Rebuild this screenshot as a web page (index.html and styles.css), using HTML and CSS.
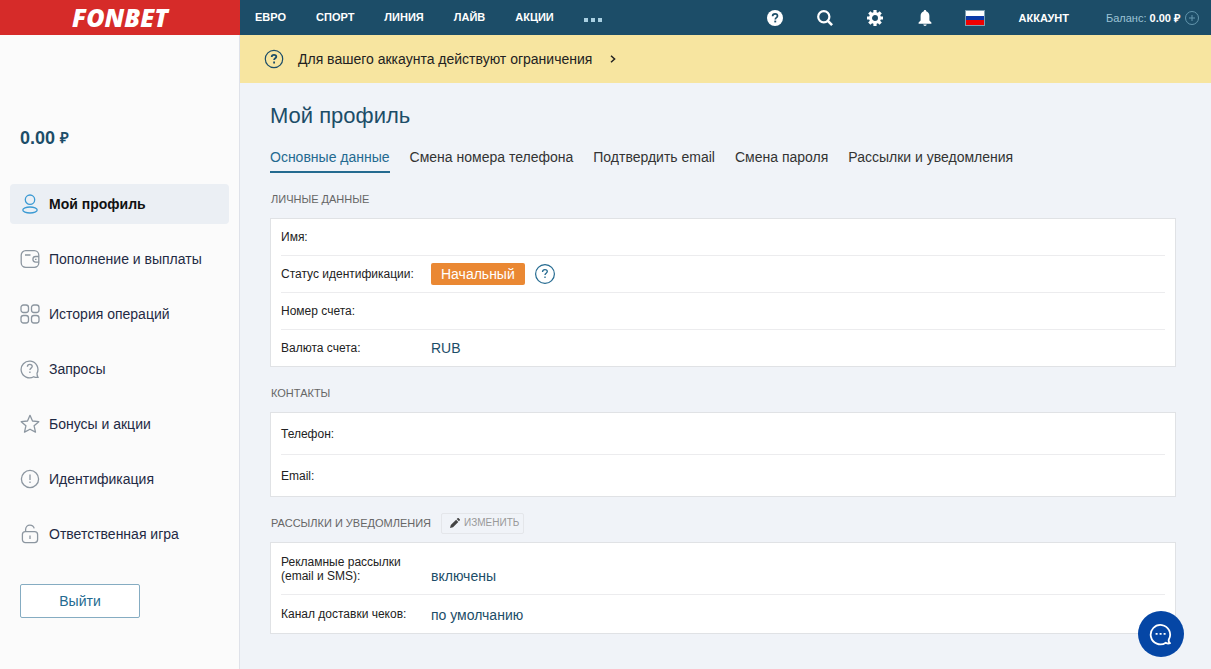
FILE: index.html
```
<!DOCTYPE html>
<html lang="ru">
<head>
<meta charset="utf-8">
<meta name="viewport" content="width=device-width, initial-scale=1">
<title>Мой профиль</title>
<link rel="stylesheet" href="styles.css">
</head>
<body>
<div class="page">
  <header class="topbar">
    <a class="logo" href="#">FONBET</a>
    <nav class="nav" aria-label="Разделы">
      <a href="#">ЕВРО</a>
      <a href="#">СПОРТ</a>
      <a href="#">ЛИНИЯ</a>
      <a href="#">ЛАЙВ</a>
      <a href="#">АКЦИИ</a>
      <button class="nav-more" type="button" aria-label="Ещё"><i></i><i></i><i></i></button>
    </nav>
    <div class="tools">
      <button class="tool" type="button" aria-label="Помощь">
        <svg width="16" height="16" viewBox="0 0 16 16"><circle cx="8" cy="8" r="8" fill="#fff"/><path d="M5.600 6.300c0-1.500 1-2.400 2.500-2.400s2.400.9 2.400 2.100c0 1.600-2.200 1.700-2.200 3.400" fill="none" stroke="#1c4d68" stroke-width="1.700"/><path d="M7.300 10.600h1.900v1.800H7.300z" fill="#1c4d68"/></svg>
      </button>
      <button class="tool" type="button" aria-label="Поиск">
        <svg width="16" height="16" viewBox="0 0 16 16" fill="none" stroke="#fff"><circle cx="6.800" cy="6.800" r="5.600" stroke-width="2.200"/><path d="M10.800 10.800l4.300 4.300" stroke-width="2.600"/></svg>
      </button>
      <button class="tool" type="button" aria-label="Настройки">
        <svg width="16" height="16" viewBox="0 0 16 16" fill="none" stroke="#fff"><circle cx="8" cy="8" r="4.500" stroke-width="3"/><g stroke-width="3.200"><path d="M8 0v3M8 13v3M0 8h3M13 8h3"/><path d="M2.300 2.300l2.200 2.200M11.500 11.500l2.200 2.200M13.700 2.300l-2.200 2.200M4.500 11.500l-2.200 2.200"/></g></svg>
      </button>
      <button class="tool" type="button" aria-label="Уведомления">
        <svg width="16" height="16" viewBox="0 0 16 16" fill="#fff"><path d="M8 0c.8 0 1.200.5 1.200 1.300 2 .6 3.200 2.300 3.200 4.500V10.500l2 2v1.300H1.600v-1.300l2-2V5.800c0-2.200 1.200-3.900 3.200-4.500C6.800.5 7.200 0 8 0zM6.300 14.600h3.400C9.600 15.500 9 16 8 16s-1.600-.5-1.700-1.400z"/></svg>
      </button>
      <button class="tool" type="button" aria-label="Язык: русский"><span class="flag"></span></button>
    </div>
    <a class="account" href="#">АККАУНТ</a>
    <div class="balance">
      <span>Баланс: <b>0.00 ₽</b></span>
      <button class="topup" type="button" aria-label="Пополнить">
        <svg width="14" height="14" viewBox="0 0 14 14" fill="none" stroke="#6497ae"><circle cx="7" cy="7" r="6.500"/><path d="M7 4v6M4 7h6"/></svg>
      </button>
    </div>
  </header>

  <aside class="sidebar">
    <div class="amount">0.00 <span>₽</span></div>
    <nav class="menu" aria-label="Меню профиля">
      <a class="menu-item active" href="#"><svg class="icon" viewBox="0 0 20 20"><circle cx="10" cy="5.700" r="4.700"/><ellipse cx="10" cy="16" rx="7.200" ry="3"/></svg>Мой профиль</a>
      <a class="menu-item" href="#"><svg class="icon" viewBox="0 0 20 20"><rect x="1.200" y="1.700" width="17.600" height="16.600" rx="4.500"/><path d="M5 6h5.500M19 7.500h-3.300a2.800 2.800 0 0 0 0 5.600H19M15 10.300h1.500"/></svg>Пополнение и выплаты</a>
      <a class="menu-item" href="#"><svg class="icon" viewBox="0 0 20 20"><rect x="1" y="1" width="7.500" height="7.500" rx="2.500"/><rect x="11.500" y="1" width="7.500" height="7.500" rx="2.500"/><rect x="1" y="11.500" width="7.500" height="7.500" rx="2.500"/><rect x="11.500" y="11.500" width="7.500" height="7.500" rx="2.500"/></svg>История операций</a>
      <a class="menu-item" href="#"><svg class="icon" viewBox="0 0 20 20"><path d="M18 18.300c-1.500.3-3 .1-4.200-.6A8.400 8.400 0 1 1 17 14.300c0 1.500.2 2.900 1 4z"/><path d="M7.400 7.800c0-1.500 1-2.500 2.400-2.500s2.400 1 2.400 2.200c0 1.600-2.300 1.700-2.300 3.500M9.900 12.500v1.600"/></svg>Запросы</a>
      <a class="menu-item" href="#"><svg class="icon" viewBox="0 0 20 20"><path d="M10 1.300l2.500 5.700 6.300.7-4.700 4.100 1.400 6.300L10 15.200l-5.500 2.900 1.400-6.300L1.200 7.700 7.500 7z" stroke-linejoin="round"/></svg>Бонусы и акции</a>
      <a class="menu-item" href="#"><svg class="icon" viewBox="0 0 20 20"><circle cx="10" cy="10" r="8.600"/><path d="M10 5.500v5.500M10 12.500v1.600"/></svg>Идентификация</a>
      <a class="menu-item" href="#"><svg class="icon" viewBox="0 0 20 20"><rect x="2.400" y="7.600" width="15.200" height="11" rx="3"/><path d="M5.600 7.400V5.600c0-2.700 1.800-4.500 4.300-4.500 2.300 0 3.800 1.300 4.300 3.300M10 11.500v3.400"/></svg>Ответственная игра</a>
    </nav>
    <button class="logout" type="button">Выйти</button>
  </aside>

  <main class="main">
    <a class="notice" href="#">
      <svg width="20" height="20" viewBox="0 0 20 20" fill="none" stroke="#1c4d68"><circle cx="10" cy="10" r="8.700" stroke-width="1.200"/><path d="M7.700 8c0-1.300.9-2.100 2.300-2.100s2.300.8 2.300 1.900c0 1.500-2.200 1.600-2.200 3.200M10.100 12.400v2" stroke-width="1.800"/></svg>
      <span>Для вашего аккаунта действуют ограничения</span>
      <svg class="notice-arrow" width="6" height="8" viewBox="0 0 6 8" fill="none" stroke="#222" stroke-width="1.500"><path d="M1 .7L4.600 4 1 7.300"/></svg>
    </a>
    <div class="content">
      <h1>Мой профиль</h1>
      <nav class="tabs" aria-label="Настройки профиля">
        <a class="current" href="#">Основные данные</a>
        <a href="#">Смена номера телефона</a>
        <a href="#">Подтвердить email</a>
        <a href="#">Смена пароля</a>
        <a href="#">Рассылки и уведомления</a>
      </nav>

      <section>
        <div class="section-head"><h2>ЛИЧНЫЕ ДАННЫЕ</h2></div>
        <dl class="card">
          <div class="row"><dt>Имя:</dt><dd></dd></div>
          <div class="row"><dt>Статус идентификации:</dt><dd><span class="badge">Начальный</span><button class="hint" type="button" aria-label="О статусе"><svg width="20" height="20" viewBox="0 0 20 20" fill="none" stroke="#246a90"><circle cx="10" cy="10" r="9.400" stroke-width="1.200"/><path d="M7.500 7.900c0-1.400.9-2.300 2.400-2.300s2.400.9 2.400 2c0 1.600-2.300 1.700-2.300 3.400M10 12.400V14" stroke-width="1.300"/></svg></button></dd></div>
          <div class="row"><dt>Номер счета:</dt><dd></dd></div>
          <div class="row"><dt>Валюта счета:</dt><dd>RUB</dd></div>
        </dl>
      </section>

      <section>
        <div class="section-head"><h2>КОНТАКТЫ</h2></div>
        <dl class="card roomy">
          <div class="row"><dt>Телефон:</dt><dd></dd></div>
          <div class="row"><dt>Email:</dt><dd></dd></div>
        </dl>
      </section>

      <section>
        <div class="section-head"><h2>РАССЫЛКИ И УВЕДОМЛЕНИЯ</h2>
          <button class="edit" type="button"><svg width="10" height="10" viewBox="0 0 10 10" fill="#444"><path d="M0 10l.8-3 5.300-5.300 2.200 2.200L3 9.200zM6.700 1.100L7.500.3c.4-.4.9-.4 1.200 0l1 1c.4.3.4.800 0 1.200l-.8.8z"/></svg>ИЗМЕНИТЬ</button>
        </div>
        <dl class="card mailing">
          <div class="row"><dt>Рекламные рассылки (email и SMS):</dt><dd>включены</dd></div>
          <div class="row"><dt>Канал доставки чеков:</dt><dd>по умолчанию</dd></div>
        </dl>
      </section>
    </div>
  </main>
</div>
<button class="chat" type="button" aria-label="Чат">
  <svg width="24" height="24" viewBox="0 0 24 24" fill="none" stroke="#fff" stroke-width="1.800"><path d="M21 21.200c-1.600.6-3 .3-4.200-.5A9.700 9.700 0 1 1 19.800 17.500c-.4 1.500-.1 2.700 1.200 3.700z" stroke-linejoin="round"/><path d="M6.600 11.800h2M10.600 11.800h2M14.600 11.800h2"/></svg>
</button>
</body>
</html>
```
FILE: styles.css
```
* { box-sizing: border-box; }

body {
  margin: 0;
  background: #f0f3f8;
  color: #222;
  font: 14px/20px "Liberation Sans", Arial, sans-serif;
}

a { color: inherit; text-decoration: none; }

button {
  margin: 0;
  padding: 0;
  border: 0;
  background: none;
  color: inherit;
  font: inherit;
  cursor: pointer;
}

svg { display: block; flex: none; }

.page {
  display: grid;
  grid-template: 35px 1fr / 240px minmax(0, 1fr);
  min-height: 100vh;
}

/* Top bar */
.topbar {
  grid-column: 1 / -1;
  display: flex;
  align-items: stretch;
  background: #1c4d68;
  color: #fff;
  font-size: 11px;
}

.logo {
  flex: none;
  width: 240px;
  background: #d62b29;
  font: italic 800 25px/35px "Open Sans", sans-serif;
  text-align: center;
}

.nav {
  display: flex;
  flex: 1;
  align-items: center;
  gap: 30px;
  padding: 0 0 2px 15px;
  font-weight: bold;
}

.nav-more { display: flex; gap: 3px; padding-top: 6px; }
.nav-more i { width: 4px; height: 4px; background: #a9d0e2; }

.tools { display: flex; }
.tool { display: grid; place-items: center; width: 50px; }

.flag {
  width: 20px;
  height: 16px;
  border: 1px solid #7d9fb2;
  background: linear-gradient(#fff 33%, #0b3aa8 33% 66%, #f00000 66%);
}

.account { align-self: center; margin-left: 19px; font-weight: bold; }

.balance {
  display: flex;
  align-items: center;
  gap: 5px;
  margin-left: 37px;
  padding-right: 12px;
  color: #9cc3d6;
}
.balance b { color: #fff; }

/* Sidebar */
.sidebar {
  padding: 92px 10px 20px;
  border-right: 1px solid #dfe2e9;
  background: #fbfbfb;
}

.amount {
  padding-left: 10px;
  color: #1c4d68;
  font-size: 18px;
  font-weight: bold;
  line-height: 22px;
}
.amount span { font-size: 15px; vertical-align: 1px; }

.menu { display: grid; gap: 15px; margin-top: 35px; }

.menu-item {
  display: flex;
  align-items: center;
  gap: 9px;
  height: 40px;
  padding: 0 10px;
  border-radius: 4px;
  color: #1f2a44;
}
.menu-item.active { background: #ebeff4; color: #111; font-weight: bold; }

.icon { width: 20px; height: 20px; fill: none; stroke: #8c96a0; stroke-width: 1.3; }
.active .icon { stroke: #3b9ad3; }

.logout {
  width: 120px;
  height: 34px;
  margin: 30px 0 0 10px;
  border: 1px solid #85acc2;
  border-radius: 2px;
  background: #fff;
  color: #246a90;
}

/* Main column */
.notice {
  display: flex;
  align-items: center;
  height: 48px;
  padding: 0 24px;
  gap: 14px;
  background: #f7e5a0;
}
.notice-arrow { margin-left: 4px; }

.content { padding: 20px 35px 35px 30px; }

h1, h2, dl, dd { margin: 0; font-weight: normal; }

h1 { color: #1c4d68; font-size: 22px; line-height: 26px; }

.tabs { display: flex; gap: 20px; margin-top: 15px; }
.tabs a { padding: 3px 0 4px; border-bottom: 2px solid transparent; color: #333; }
.tabs .current { border-color: #246a90; color: #246a90; }

.section-head {
  display: flex;
  align-items: center;
  gap: 10px;
  height: 45px;
  padding: 7px 0 0 1px;
}

h2 { color: #666; font-size: 11px; }

.edit {
  display: flex;
  align-items: center;
  gap: 4px;
  height: 21px;
  padding: 0 4px 0 8px;
  border: 1px solid #e4e6ea;
  border-radius: 2px;
  color: #999;
  font-size: 10px;
}

.card { padding: 0 10px; border: 1px solid #e0e2e5; background: #fff; }

.row {
  display: grid;
  grid-template-columns: 140px 1fr;
  gap: 10px;
  align-items: center;
  min-height: 37px;
}
.row + .row { border-top: 1px solid #ececee; }
.row:first-child { min-height: 36px; }

dt { font-size: 12px; line-height: 14px; }
dd { display: flex; align-items: center; gap: 10px; color: #1c4d68; }

.roomy .row { min-height: 42px; }
.roomy .row:first-child { min-height: 41px; }

.mailing .row { min-height: 39px; }
.mailing .row:first-child { min-height: 51px; }
.mailing dd { padding-top: 2px; }
.mailing .row:first-child dd { align-self: end; padding-bottom: 8px; }

.badge {
  padding: 0 10px;
  border-radius: 2px;
  background: #ea8833;
  color: #fff;
  line-height: 22px;
}

.chat {
  position: fixed;
  right: 27px;
  bottom: 12px;
  display: grid;
  place-items: center;
  width: 46px;
  height: 46px;
  border-radius: 50%;
  background: #0546a5;
}
```
